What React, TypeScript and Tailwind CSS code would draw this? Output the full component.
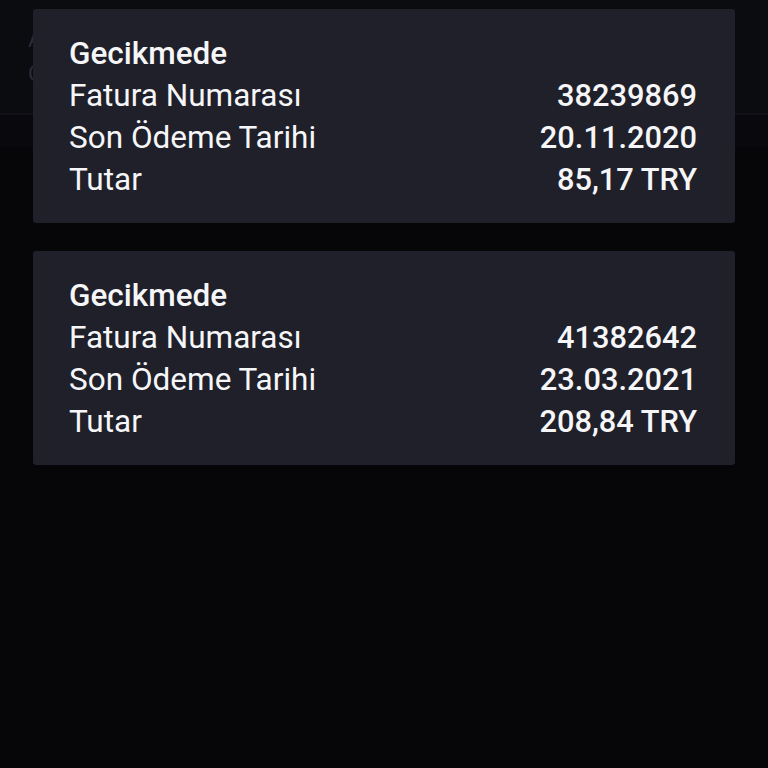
const invoices = [
    { status: 'Gecikmede', number: '38239869', dueDate: '20.11.2020', amount: '85,17 TRY' },
    { status: 'Gecikmede', number: '41382642', dueDate: '23.03.2021', amount: '208,84 TRY' },
];

export default function App() {
    return (
        <div
            className="relative h-[768px] w-[768px] overflow-hidden bg-[#060609] text-[#f6f6f8]"
            style={{ fontFamily: 'Roboto, "Noto Sans", sans-serif' }}
        >
            {/* dimmed page behind the sheet */}
            <div className="flex h-[113px] flex-col justify-center gap-3 bg-[#0b0c10] pl-[28px] text-[22px] text-[#2a2c36]">
                <span className="leading-none">A</span>
                <span className="leading-none">C</span>
            </div>
            <div className="h-[2px] bg-[#101117]" />
            <div className="h-[32px] bg-[#09090d]" />

            <div className="absolute inset-x-[33px] top-[9px] flex flex-col gap-[28px]">
                {invoices.map((invoice) => (
                    <InvoiceCard key={invoice.number} {...invoice} />
                ))}
            </div>
        </div>
    );
}

function InvoiceCard({
    status,
    number,
    dueDate,
    amount,
}: {
    status: string;
    number: string;
    dueDate: string;
    amount: string;
}) {
    return (
        <div className="rounded-[3px] bg-[#1f2029] pt-[24px] pr-[38px] pb-[22px] pl-[36px] text-[31.5px] leading-[42px]">
            <div className="font-medium">{status}</div>
            <Row label="Fatura Numarası" value={number} />
            <Row label="Son Ödeme Tarihi" value={dueDate} />
            <Row label="Tutar" value={amount} />
        </div>
    );
}

function Row({ label, value }: { label: string; value: string }) {
    return (
        <div className="flex items-center justify-between">
            <span>{label}</span>
            <span className="text-[30.8px] font-medium">{value}</span>
        </div>
    );
}
